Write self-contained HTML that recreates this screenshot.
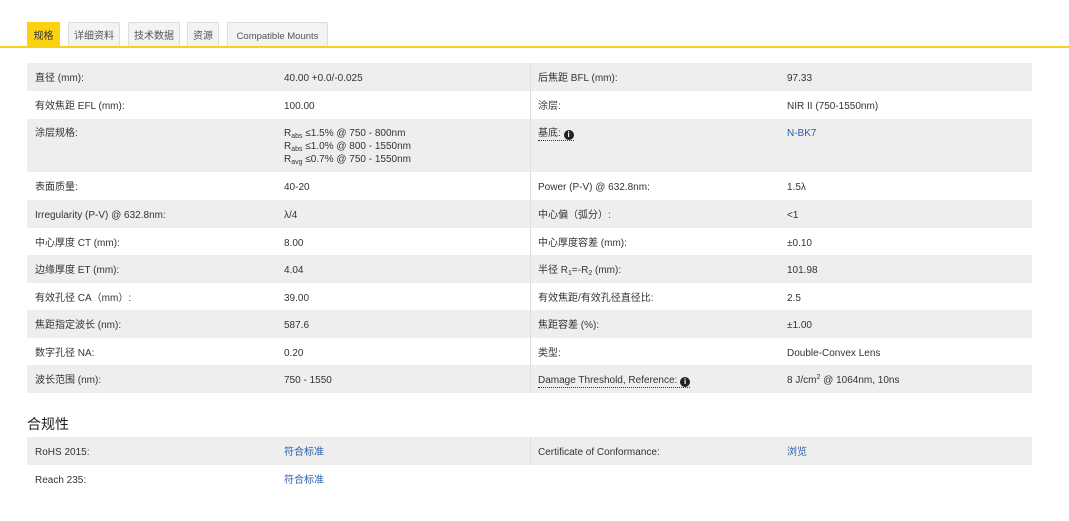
<!DOCTYPE html>
<html><head><meta charset="utf-8"><style>
*{margin:0;padding:0;box-sizing:border-box}
body{width:1069px;height:521px;background:#fff;font-family:"Liberation Sans","Noto Sans CJK SC",sans-serif;font-size:10px;color:#333;position:relative;overflow:hidden}
.tab{position:absolute;top:22px;height:24px;border:1px solid #ddd;border-bottom:none;background:#f3f3f3;color:#555;line-height:27px;font-size:10px;text-align:center;white-space:nowrap;overflow:hidden}
.tab.a{background:#fcd20f;border-color:#fcd20f;color:#333}
.line{position:absolute;top:46px;left:0;width:1069px;height:2px;background:#f7d117}
.row{position:absolute;left:27px;width:1005px;height:28px;line-height:28px;white-space:nowrap}
.row.g{background:#eeeeee}
.row span.c{position:absolute;top:2px}
.row .l1{left:8px}.row .v1{left:257px}.row .l2{left:511px}.row .v2{left:760px}
.row .dv{position:absolute;left:503px;top:0;width:1px;height:100%;background:#ddd}
.tall{height:53px}
.tall span.c{top:8px;line-height:13px}
.lk{color:#2a5ea8}
sub{font-size:7px;vertical-align:-2px;line-height:0}
sup{font-size:7px;vertical-align:4px;line-height:0}
.dot{border-bottom:1px dotted #333;line-height:12px;display:inline-block}
.i{display:inline-block;width:10px;height:10px;border-radius:50%;background:#222;color:#fff;font-size:8px;text-align:center;line-height:10px;font-weight:bold;vertical-align:-1px}
h3{position:absolute;left:27px;top:415px;font-size:14px;font-weight:normal;color:#222;line-height:18px}
</style></head><body>
<div class="tab a" style="left:27px;width:33px">规格</div>
<div class="tab" style="left:68px;width:52px">详细资料</div>
<div class="tab" style="left:128px;width:52px">技术数据</div>
<div class="tab" style="left:187px;width:32px">资源</div>
<div class="tab" style="left:227px;width:101px;font-size:9.5px">Compatible Mounts</div>
<div class="line"></div>

<div class="row g" style="top:63px"><span class="c l1">直径 (mm):</span><span class="c v1">40.00 +0.0/-0.025</span><i class="dv"></i><span class="c l2">后焦距 BFL (mm):</span><span class="c v2">97.33</span></div>
<div class="row" style="top:91px"><span class="c l1">有效焦距 EFL (mm):</span><span class="c v1">100.00</span><i class="dv"></i><span class="c l2">涂层:</span><span class="c v2">NIR II (750-1550nm)</span></div>
<div class="row g tall" style="top:119px"><span class="c l1">涂层规格:</span><span class="c v1">R<sub>abs</sub> ≤1.5% @ 750 - 800nm<br>R<sub>abs</sub> ≤1.0% @ 800 - 1550nm<br>R<sub>avg</sub> ≤0.7% @ 750 - 1550nm</span><i class="dv"></i><span class="c l2"><span class="dot">基底: <span class="i">i</span></span></span><span class="c v2 lk">N-BK7</span></div>
<div class="row" style="top:172px"><span class="c l1">表面质量:</span><span class="c v1">40-20</span><i class="dv"></i><span class="c l2">Power (P-V) @ 632.8nm:</span><span class="c v2">1.5λ</span></div>
<div class="row g" style="top:200px"><span class="c l1">Irregularity (P-V) @ 632.8nm:</span><span class="c v1">λ/4</span><i class="dv"></i><span class="c l2">中心偏（弧分）:</span><span class="c v2">&lt;1</span></div>
<div class="row" style="top:228px"><span class="c l1">中心厚度 CT (mm):</span><span class="c v1">8.00</span><i class="dv"></i><span class="c l2">中心厚度容差 (mm):</span><span class="c v2">±0.10</span></div>
<div class="row g" style="top:255px"><span class="c l1">边缘厚度 ET (mm):</span><span class="c v1">4.04</span><i class="dv"></i><span class="c l2">半径 R<sub>1</sub>=-R<sub>2</sub> (mm):</span><span class="c v2">101.98</span></div>
<div class="row" style="top:283px"><span class="c l1">有效孔径 CA（mm）:</span><span class="c v1">39.00</span><i class="dv"></i><span class="c l2">有效焦距/有效孔径直径比:</span><span class="c v2">2.5</span></div>
<div class="row g" style="top:310px"><span class="c l1">焦距指定波长 (nm):</span><span class="c v1">587.6</span><i class="dv"></i><span class="c l2">焦距容差 (%):</span><span class="c v2">±1.00</span></div>
<div class="row" style="top:338px"><span class="c l1">数字孔径 NA:</span><span class="c v1">0.20</span><i class="dv"></i><span class="c l2">类型:</span><span class="c v2">Double-Convex Lens</span></div>
<div class="row g" style="top:365px"><span class="c l1">波长范围 (nm):</span><span class="c v1">750 - 1550</span><i class="dv"></i><span class="c l2"><span class="dot">Damage Threshold, Reference: <span class="i">i</span></span></span><span class="c v2">8 J/cm<sup>2</sup> @ 1064nm, 10ns</span></div>

<h3>合规性</h3>
<div class="row g" style="top:437px"><span class="c l1">RoHS 2015:</span><span class="c v1 lk">符合标准</span><i class="dv"></i><span class="c l2">Certificate of Conformance:</span><span class="c v2 lk">浏览</span></div>
<div class="row" style="top:465px"><span class="c l1">Reach 235:</span><span class="c v1 lk">符合标准</span></div>
</body></html>
